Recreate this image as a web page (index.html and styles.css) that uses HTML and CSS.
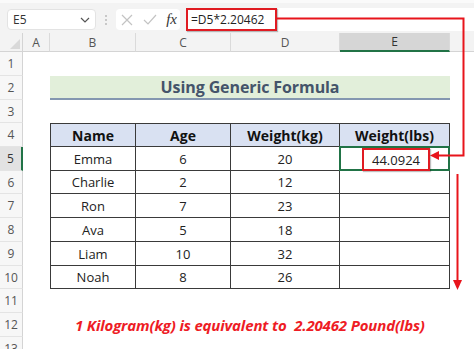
FILE: index.html
```html
<!DOCTYPE html>
<html>
<head>
<meta charset="utf-8">
<link rel="stylesheet" href="styles.css">
</head>
<body>
<div class="app">
  <div class="topbar">
    <div class="namebox"><span>E5</span>
      <svg width="10" height="6" viewBox="0 0 10 6"><path d="M1 1l4 4 4-4" fill="none" stroke="#555" stroke-width="1.2"/></svg>
    </div>
    <div class="dots"><i></i><i></i><i></i></div>
    <div class="fnbox">
      <svg width="12" height="12" viewBox="0 0 12 12"><path d="M1 1l10 10M11 1L1 11" stroke="#c3c3c3" stroke-width="1.2"/></svg>
      <svg width="14" height="12" viewBox="0 0 14 12"><path d="M1 6l4 4 8-9" fill="none" stroke="#c3c3c3" stroke-width="1.2"/></svg>
      <span class="fx">fx</span>
    </div>
    <div class="formula"><span class="ftext">=D5*2.20462</span></div>
  </div>
  <div class="sheet">
    <div class="corner"><svg width="10" height="10" viewBox="0 0 10 10"><path d="M10 0V10H0z" fill="#d9d9d9"/></svg></div>
    <div class="ch">A</div><div class="ch">B</div><div class="ch">C</div><div class="ch">D</div><div class="ch sel">E</div><div class="ch last"></div>

    <div class="rh">1</div><div class="blank"></div>

    <div class="rh">2</div><div class="c"></div><div class="title">Using Generic Formula</div><div class="c"></div>

    <div class="rh">3</div><div class="blank"></div>

    <div class="rh">4</div><div class="c"></div><div class="t th first">Name</div><div class="t th">Age</div><div class="t th">Weight(kg)</div><div class="t th">Weight(lbs)</div><div class="c"></div>

    <div class="rh rsel">5</div><div class="c"></div><div class="t first">Emma</div><div class="t">6</div><div class="t">20</div><div class="t active"><span class="hl">44.0924</span></div><div class="c"></div>

    <div class="rh">6</div><div class="c"></div><div class="t first">Charlie</div><div class="t">2</div><div class="t">12</div><div class="t"></div><div class="c"></div>

    <div class="rh">7</div><div class="c"></div><div class="t first">Ron</div><div class="t">7</div><div class="t">23</div><div class="t"></div><div class="c"></div>

    <div class="rh">8</div><div class="c"></div><div class="t first">Ava</div><div class="t">5</div><div class="t">18</div><div class="t"></div><div class="c"></div>

    <div class="rh">9</div><div class="c"></div><div class="t first">Liam</div><div class="t">10</div><div class="t">32</div><div class="t"></div><div class="c"></div>

    <div class="rh">10</div><div class="c"></div><div class="t first">Noah</div><div class="t">8</div><div class="t">26</div><div class="t"></div><div class="c"></div>

    <div class="rh">11</div><div class="blank"></div>

    <div class="rh">12</div><div class="c"></div><div class="note">1 Kilogram(kg) is equivalent to&nbsp; 2.20462 Pound(lbs)</div>

    <div class="rh">13</div><div class="blank"></div>
  </div>
  <svg class="arrows" width="474" height="349" viewBox="0 0 474 349">
    <path d="M277 18.5H463.5V155.5H438" fill="none" stroke="#e8141b" stroke-width="2"/>
    <path d="M430 155.5l9-4.5v9z" fill="#e8141b"/>
    <path d="M457.5 174V280" fill="none" stroke="#e8141b" stroke-width="2"/>
    <path d="M457.5 290l-4.5-10h9z" fill="#e8141b"/>
  </svg>
</div>
</body>
</html>
```

FILE: styles.css
```css
* { box-sizing: border-box; }
html, body { margin: 0; padding: 0; background: #fff; }
body { font-family: "Open Sans", "Liberation Sans", sans-serif; }
.app { position: relative; width: 474px; height: 349px; overflow: hidden; }

.topbar {
  height: 33px;
  background: #f3f3f3;
  border-top: 3px solid #fafafa;
  display: flex;
  align-items: center;
  padding: 3px 0 0 7px;
}
.namebox {
  width: 89px; height: 21px;
  background: #fff;
  border: 1px solid #e3e3e3;
  border-radius: 4px;
  display: flex; align-items: center; justify-content: space-between;
  padding: 0 5px 0 5px;
  font-size: 12px; color: #333;
}
.dots { width: 20px; display: flex; flex-direction: column; align-items: center; gap: 2px; }
.dots i { width: 2px; height: 2px; background: #c8c8c8; display: block; }
.fnbox {
  width: 64px; height: 21px;
  background: #fff; border-radius: 4px;
  display: flex; align-items: center; justify-content: space-between;
  padding: 0 3px 0 5px;
}
.fx { font-family: "Liberation Serif", serif; font-style: italic; font-size: 15px; color: #333; }
.formula {
  flex: 1; height: 23px; margin-left: 6px;
  background: #fff;
  display: flex; align-items: center;
}
.ftext {
  height: 23px; width: 91px;
  border: 2px solid #e01b22;
  font-size: 12px; color: #222;
  display: flex; align-items: center; padding-left: 3px;
  box-shadow: 1px 1px 1px rgba(0,0,0,.25);
}

.sheet {
  display: grid;
  grid-template-columns: 23px 27px 86px 95px 109px 110px 1fr;
  grid-template-rows: 19px 24px 24px 23px 24px 24px 23px 24px 24px 24px 23px 24px 24px 24px;
}
.corner { background: #f3f3f3; border-right: 1px solid #d4d4d4; border-bottom: 1px solid #d4d4d4; display: flex; align-items: flex-end; justify-content: flex-end; padding: 0 2px 2px 0; }
.ch {
  background: #f3f3f3;
  border-right: 1px solid #dadada;
  border-bottom: 1px solid #d4d4d4;
  font-size: 12px; color: #555;
  display: flex; align-items: center; justify-content: center;
}
.ch.sel { background: #d6d6d6; border-bottom: 2px solid #217346; color: #333; }
.ch.last { border-right: none; }
.rh {
  background: #f7f7f7;
  border-right: 1px solid #d4d4d4;
  border-bottom: 1px solid #e4e4e4;
  font-size: 12px; color: #555;
  display: flex; align-items: center; justify-content: center;
}
.rh.rsel { background: #e2e2e2; border-right: 2px solid #217346; color: #333; }
.blank { grid-column: 2 / -1; }
.title {
  grid-column: 3 / 7;
  background: #e2efda;
  border-bottom: 2px solid #8497b0;
  font-family: "Open Sans", sans-serif;
  font-weight: 700; font-size: 16px; color: #44546a;
  display: flex; align-items: center; justify-content: center;
  letter-spacing: -0.1px;
}
.t {
  border-right: 1px solid #3a3a3a;
  border-bottom: 1px solid #3a3a3a;
  font-size: 13px; color: #222;
  display: flex; align-items: center; justify-content: center;
}
.t.first { border-left: 1px solid #3a3a3a; }
.th { background: #d9e1f2; border-top: 1px solid #3a3a3a; font-weight: 700; font-size: 14px; color: #111; }
.active { position: relative; }
.active::after {
  content: ""; position: absolute; left: -1px; top: -1px; right: -1px; bottom: -1px;
  border: 2px solid #217346;
}
.hl {
  position: absolute; left: 22px; top: 1px; width: 68px; height: 23px;
  border: 2px solid #e01b22;
  display: flex; align-items: center; justify-content: center;
  box-shadow: 1px 1px 1px rgba(0,0,0,.25);
  z-index: 1;
}
.note {
  grid-column: 3 / -1;
  font-weight: 700; font-style: italic; font-size: 15px;
  color: #ee1c25;
  display: flex; align-items: center;
  padding-left: 25px;
  letter-spacing: -0.15px;
  white-space: nowrap;
}
.arrows { position: absolute; left: 0; top: 0; pointer-events: none; }
```
